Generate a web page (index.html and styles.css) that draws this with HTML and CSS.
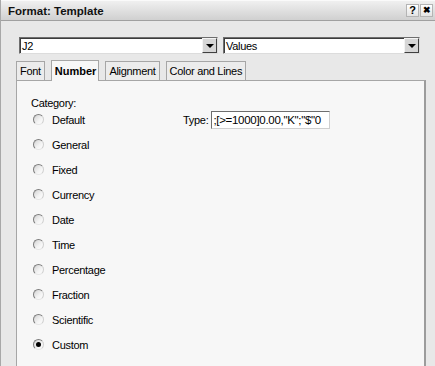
FILE: index.html
```html
<!DOCTYPE html>
<html>
	<head>
		<meta charset="UTF-8">
		<title>Format: Template</title>
		<link rel="stylesheet" href="styles.css">
	</head>
	<body>
		<div class="window">
			<div class="titlebar">
				<span class="title">Format: Template</span>
				<div class="tbtns">
					<span class="tbtn">?</span>
					<span class="tbtn close">&#10006;</span>
				</div>
			</div>
			<div class="content">
				<div class="selects">
					<div class="combo first"><span class="val">J2</span><span class="arrow"><i></i></span></div>
					<div class="combo second"><span class="val">Values</span><span class="arrow"><i></i></span></div>
				</div>
				<div class="tabs">
					<span class="tab">Font</span>
					<span class="tab active">Number</span>
					<span class="tab">Alignment</span>
					<span class="tab">Color and Lines</span>
				</div>
				<div class="panel">
					<div class="category">
						<div class="cat-label">Category:</div>
						<ul class="radios">
							<li><span class="radio"></span>Default</li>
							<li><span class="radio"></span>General</li>
							<li><span class="radio"></span>Fixed</li>
							<li><span class="radio"></span>Currency</li>
							<li><span class="radio"></span>Date</li>
							<li><span class="radio"></span>Time</li>
							<li><span class="radio"></span>Percentage</li>
							<li><span class="radio"></span>Fraction</li>
							<li><span class="radio"></span>Scientific</li>
							<li><span class="radio checked"></span>Custom</li>
						</ul>
					</div>
					<div class="type">
						<span class="type-label">Type:</span>
						<div class="type-input">;[&gt;=1000]0.00,"K";"$"0</div>
					</div>
				</div>
			</div>
		</div>
	</body>
</html>
```

FILE: styles.css
```css
*{
	margin:0px;
	padding:0px;
	box-sizing:border-box;
}
body{
	background:#e8e8e8;
	font-family:"Liberation Sans", Arial, sans-serif;
	font-size:11px;
	letter-spacing:-0.3px;
	color:#000;
	overflow:hidden;
}
.window{
	width:435px;
	height:366px;
	border-left:1px solid #a8a8a8;
}
.titlebar{
	height:21px;
	display:flex;
	align-items:center;
	justify-content:space-between;
	padding-left:7px;
	padding-right:2px;
	background:linear-gradient(#f0f0f0, #d0d0d0);
	border-top:1px solid #fafafa;
	border-bottom:1px solid #a0a0a0;
}
.title{
	font-weight:bold;
	font-size:11.5px;
	letter-spacing:0;
	color:#111;
}
.tbtns{
	display:flex;
	gap:1px;
}
.tbtn{
	width:13px;
	height:13px;
	display:flex;
	align-items:center;
	justify-content:center;
	background:linear-gradient(#ffffff, #e4e4e4);
	border:1px solid #b4b4b4;
	font-weight:bold;
	font-size:11px;
	letter-spacing:0;
	line-height:1;
}
.close{
	font-size:9px;
}
.content{
	padding-left:15px;
}
.selects{
	display:flex;
	gap:5px;
	margin-top:16px;
	margin-left:3px;
}
.combo{
	height:17px;
	display:flex;
	align-items:center;
	background:#fff;
	border-top:1px solid #6e6e6e;
	border-left:1px solid #6e6e6e;
	border-right:1px solid #dcdcdc;
	border-bottom:1px solid #dcdcdc;
	box-shadow:inset 1px 1px 0 #3c3c3c;
}
.first{
	width:199px;
}
.second{
	width:197px;
}
.val{
	flex:1;
	padding-left:2px;
}
.arrow{
	width:15px;
	height:15px;
	display:flex;
	align-items:center;
	justify-content:center;
	background:#d6d6d6;
	border-top:1px solid #f4f4f4;
	border-left:1px solid #f4f4f4;
	border-right:1px solid #404040;
	border-bottom:1px solid #404040;
}
.arrow i{
	width:0;
	height:0;
	border-left:4px solid transparent;
	border-right:4px solid transparent;
	border-top:4px solid #000;
	margin-top:1px;
}
.tabs{
	display:flex;
	gap:6px;
	margin-top:6px;
	height:20px;
	align-items:flex-end;
	position:relative;
	z-index:2;
}
.tab{
	height:19px;
	padding:0 3px;
	display:flex;
	align-items:center;
	background:#ececec;
	border:1px solid #a6a6a6;
	border-bottom:none;
}
.tab.active{
	height:21px;
	margin-bottom:-1px;
	background:#f7f7f7;
	font-weight:bold;
	letter-spacing:0;
	padding:0 2px 0 3px;
}
.panel{
	width:410px;
	height:290px;
	background:#f7f7f7;
	border-top:1px solid #a6a6a6;
	border-left:1px solid #a6a6a6;
	border-right:2px solid #9c9c9c;
	display:flex;
	align-items:flex-start;
}
.category{
	width:165px;
	padding-top:15px;
	padding-left:14px;
}
.cat-label{
	line-height:14px;
}
ul{
	list-style:none;
}
.radios{
	margin-top:-3px;
	padding-left:2px;
}
.radios li{
	height:25px;
	display:flex;
	align-items:center;
}
.radio{
	width:11px;
	height:11px;
	border-radius:50%;
	margin-right:8px;
	background:linear-gradient(135deg, #d2d2d2 0%, #f2f2f2 55%, #ffffff 100%);
	border:1px solid;
	border-color:#7c7c7c #cfcfcf #e6e6e6 #7c7c7c;
	position:relative;
}
.radio.checked::after{
	content:"";
	position:absolute;
	left:2px;
	top:2px;
	width:5px;
	height:5px;
	border-radius:50%;
	background:#000;
}
.type{
	display:flex;
	align-items:center;
	gap:3px;
	margin-top:30px;
	margin-left:1px;
}
.type-input{
	width:119px;
	height:18px;
	line-height:16px;
	padding-left:1px;
	background:#fff;
	border-top:1px solid #6e6e6e;
	border-left:1px solid #6e6e6e;
	border-right:1px solid #cfcfcf;
	border-bottom:1px solid #cfcfcf;
	overflow:hidden;
	white-space:nowrap;
	font-size:11.5px;
}
```
